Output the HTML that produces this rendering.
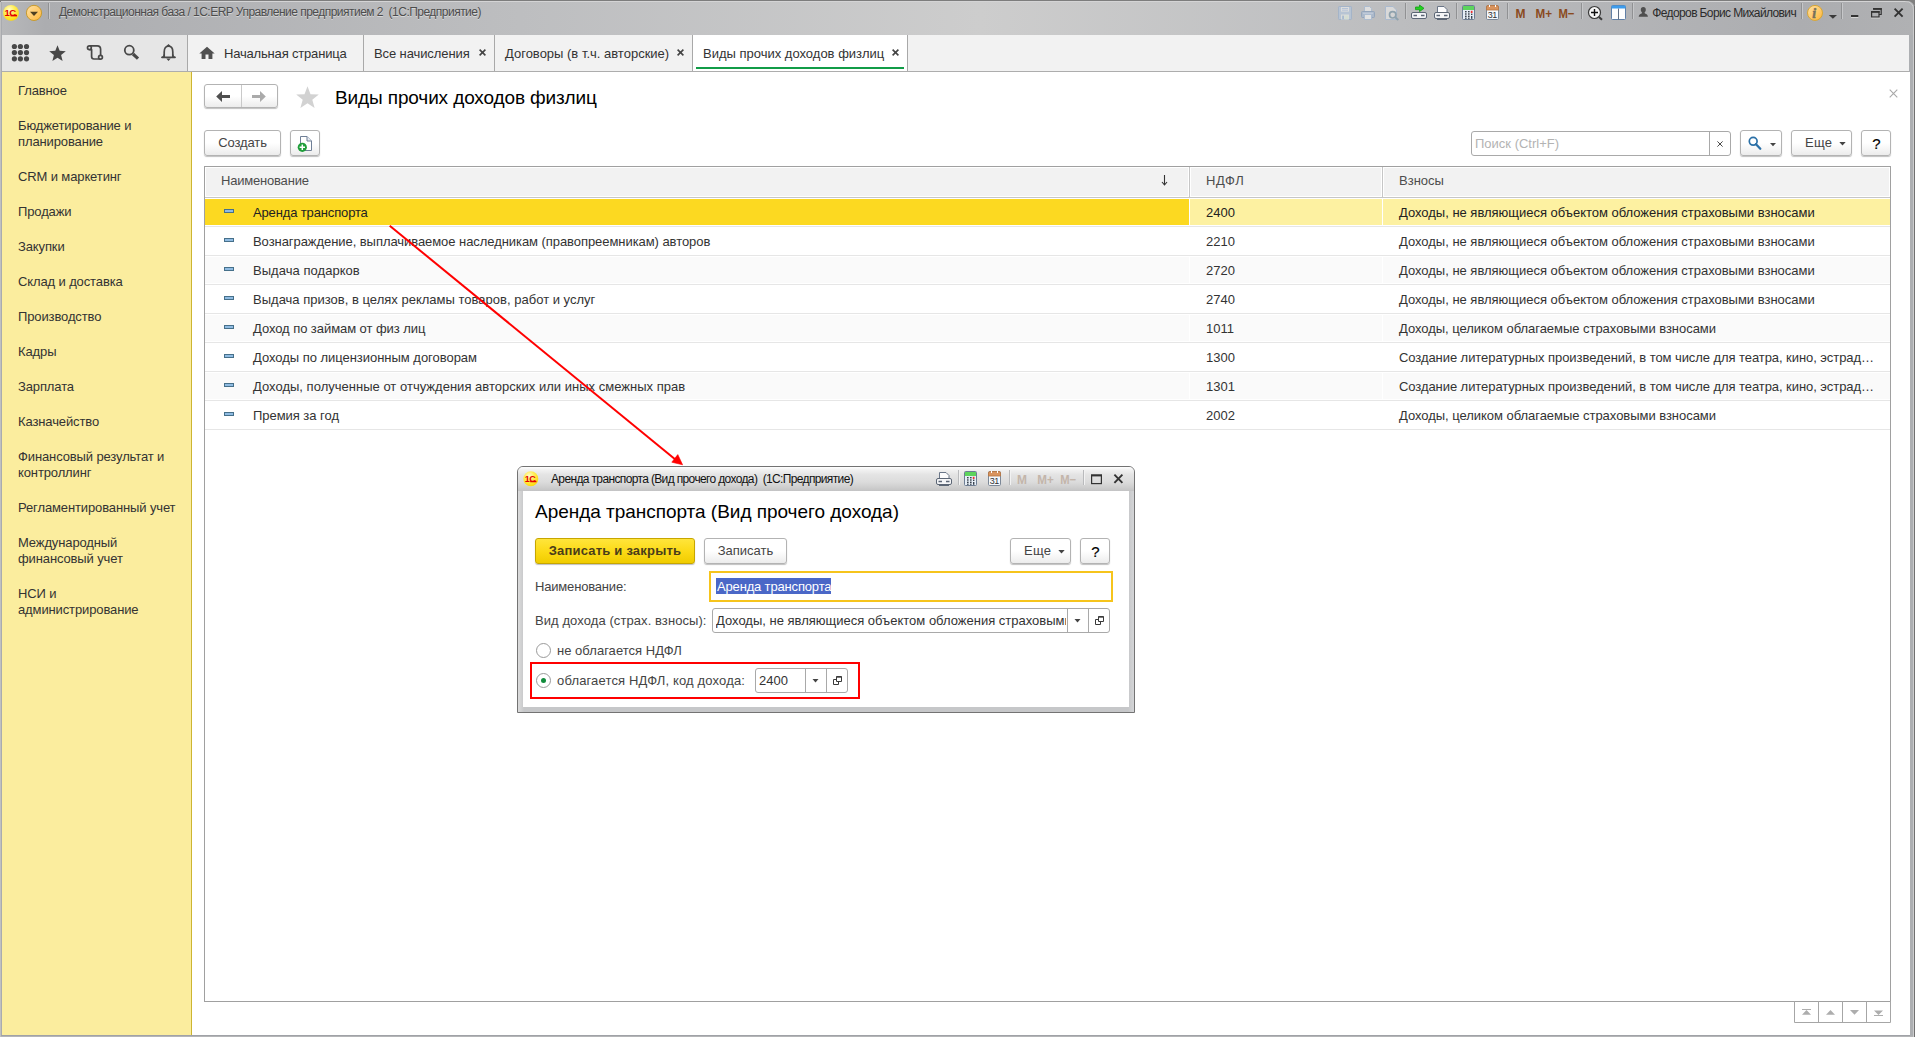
<!DOCTYPE html>
<html lang="ru">
<head>
<meta charset="utf-8">
<title>Виды прочих доходов физлиц</title>
<style>
*{box-sizing:border-box;margin:0;padding:0}
html,body{width:1915px;height:1037px;overflow:hidden;background:#fff}
body{font-family:"Liberation Sans",Arial,sans-serif;font-size:13px;color:#333;position:relative}
.abs{position:absolute}
#frame{position:absolute;left:0;top:0;width:1915px;height:1037px;background:#adafb2;overflow:hidden}
#edge{position:absolute;left:0;top:0;width:1915px;height:1037px;pointer-events:none;z-index:5}
#titlebar{position:absolute;left:0;top:0;width:1915px;height:35px;background:linear-gradient(90deg,#b8b9bb 0,#acadb0 45px,#bdbec0 520px,#cdcdcd 980px,#bcbdbf 1400px,#acadb0 1800px,#b0b1b3 1915px);border-top:1px solid #7d7d7d}
#titletext{position:absolute;left:59px;top:4px;font-size:12px;line-height:14px;color:#4c4c4c;white-space:pre;text-shadow:0 1px 0 rgba(255,255,255,.45);letter-spacing:-.52px}
#toolrow{position:absolute;left:2px;top:35px;width:1907px;height:37px;background:#f2f2f2;border-bottom:1px solid #adadad}
#iconpanel{position:absolute;left:0;top:0;width:186px;height:36px;background:#e6e6e6;border-right:1px solid #a9a9a9}
.tab{position:absolute;top:0;height:36px;border-right:1px solid #a9a9a9;font-size:13px;color:#333;line-height:36px;white-space:nowrap}
.tab svg.x{position:absolute;top:14px}
#sidebar{position:absolute;left:2px;top:72px;width:190px;height:963px;background:#fbed9e;border-right:1px solid #cdb531}
#sidebar div{position:absolute;left:16px;font-size:13px;line-height:16px;color:#333;white-space:nowrap;letter-spacing:-.12px}
#main{position:absolute;left:192px;top:72px;width:1718px;height:963px;background:#fff}
.btn{position:absolute;height:26px;border:1px solid #b3b3b3;border-radius:3px;background:linear-gradient(#fff 0%,#fff 50%,#ececec 100%);box-shadow:0 1px 1px rgba(0,0,0,.25);font-size:13px;color:#444;text-align:center;line-height:24px;white-space:nowrap}

.tab.act{background:#fff}
.tab.act i{position:absolute;left:3px;right:3px;top:32px;height:2px;background:#119c47}
.tab span.abs{top:1px}

#ftitle{font-size:19px;line-height:22px;color:#000;white-space:nowrap;letter-spacing:-.12px}
#search{border:1px solid #a9a9a9;border-radius:3px;background:#fff}
#search span{position:absolute;left:3px;top:0;line-height:23px;font-size:13px;color:#b3b3b3}
#search i{position:absolute;left:237px;top:0;width:1px;height:23px;background:#a9a9a9}
#grid{border:1px solid #a0a0a0;background:#fff}
#grid .hd{position:absolute;top:1px;height:28px;background:#f2f2f2;color:#4d4d4d;font-size:13px;line-height:28px}
#grid .hd span{position:absolute;top:-1px;white-space:nowrap}
#grid .hl{position:absolute;left:0;top:30px;width:1685px;height:1px;background:#c6c6c6}
#grid .vl{position:absolute;top:0;width:1px;height:31px;background:#c6c6c6}
.row{position:absolute;left:0;width:1685px;height:29px;border-bottom:1px solid #e6e6e6;font-size:13px;color:#333;line-height:28px}
.row b{position:absolute;top:1px;height:26px;font-weight:normal;white-space:nowrap;overflow:hidden}
.row .c1{left:0;width:984px}.row .c2{left:985px;width:192px}.row .c3{left:1178px;width:507px}
.row .c1 span{position:absolute;left:48px;top:0}.row .c2 span,.row .c3 span{position:absolute;left:16px;top:0}
.row.alt b{background:#fafafa}
.row.sel .c1{background:#fcd921}.row.sel .c2,.row.sel .c3{background:#fdf1a1}
.row.sel{color:#222}
.ic{position:absolute;left:19px;top:10px;width:10px;height:4px;background:#8fbbe2;border:1px solid #46708a}

#dlg{border:1px solid #737373;border-radius:6px 6px 0 0;background:linear-gradient(90deg,#dcdcdc 0,#c6c7c9 6px,#c6c7c9 610px,#d4d5d7 616px);overflow:hidden}
#dlg>*{position:absolute}
#dtb{left:0;top:0;width:616px;height:24px;background:linear-gradient(#ffffff 0%,#f3f3f3 10%,#e4e4e4 32%,#dcdcdc 62%,#cccccc 88%,#c3c3c4 100%)}
#dtt{left:33px;top:5px;font-size:12px;line-height:14px;color:#111;white-space:pre;letter-spacing:-.64px}
#dct{left:5px;top:24px;width:606px;height:216px;background:#fff}
#dh{left:17px;top:34px;font-size:19px;line-height:22px;color:#000;white-space:nowrap;letter-spacing:-.03px}
.ybtn{background:linear-gradient(#ffe53b 0%,#fbd914 55%,#f0cc00 100%);border-color:#c7a600;font-weight:bold;color:#4a3d1a}
.lbl{font-size:13px;line-height:16px;color:#444;white-space:nowrap;letter-spacing:.15px}
#inp1{border:2px solid #f6c41c;background:#fff}
#inp1 span{position:absolute;left:5px;top:5px;height:16px;line-height:17px;font-size:13px;background:#4a67c7;color:#fff;white-space:nowrap;padding:0 0 0 1px;letter-spacing:-.16px}
.inp{border:1px solid #a9a9a9;border-radius:3px;background:#fff;font-size:13px;color:#333}
.inp .t{position:absolute;left:3px;top:0;line-height:23px;white-space:nowrap;overflow:hidden;letter-spacing:0}
.inp i{position:absolute;top:0;width:1px;height:23px;background:#a9a9a9}
.radio{width:15px;height:15px;border:1px solid #9a9a9a;border-radius:50%;background:#fff}
.radio i{position:absolute;left:4px;top:4px;width:5px;height:5px;border-radius:50%;background:#118c3c}
</style>
</head>
<body>
<div id="frame">
 <svg id="edge" width="1915" height="1037" viewBox="0 0 1915 1037">
  <path d="M0 1.500 H1906" stroke="#d4d4d5" stroke-width="1"/>
  <path d="M1906 0 H1915 V9 Q1914.500 1.500 1906 0 Z" fill="#808080"/>
  <path d="M1905 1.500 Q1913.500 1.500 1913.500 10 V1037" fill="none" stroke="#cdcdce" stroke-width="1"/>
  <path d="M1914.500 6 V1037" stroke="#707070" stroke-width="1"/>
  <path d="M0 0 H2 V1 H1 V2 H0 Z" fill="#7a7a7a"/>
  <path d="M0.500 2 V1037" stroke="#c0c0c1" stroke-width="1"/><path d="M1.500 2 V1035" stroke="#a9abaf" stroke-width="1"/><path d="M1 1035.500 H1910" stroke="#a0a2a7" stroke-width="1"/><path d="M1 1036.500 H1913" stroke="#b4b5b7" stroke-width="1"/>
 </svg>
 <div id="titlebar">

  <svg class="abs" style="left:0;top:-1px" width="1915" height="35" viewBox="0 0 1915 35" font-family="Liberation Sans, Arial, sans-serif">
   <defs>
    <radialGradient id="g1c" cx="40%" cy="30%" r="75%"><stop offset="0" stop-color="#fffbd0"/><stop offset=".45" stop-color="#ffee55"/><stop offset="1" stop-color="#ffd800"/></radialGradient>
    <linearGradient id="gor" x1="0" y1="0" x2="1" y2="1"><stop offset="0" stop-color="#ffe2a6"/><stop offset="1" stop-color="#ffb73a"/></linearGradient>
   </defs>
   <!-- 1C logo -->
   <circle cx="11" cy="12.8" r="7.9" fill="url(#g1c)"/>
   <text x="4.6" y="16.2" font-size="9.5" font-weight="bold" fill="#e30000" letter-spacing="-.6">1С</text>
   <path d="M10.5 15.6 H17" stroke="#e30000" stroke-width="1.6"/>
   <!-- menu dropdown -->
   <circle cx="34" cy="12.9" r="7.6" fill="url(#gor)" stroke="#c79a2e" stroke-width="1"/>
   <path d="M30 11.8 H38 L34 16 Z" fill="#4e4022"/>
   <path d="M48.5 3 V19" stroke="#909193" stroke-width="1"/><path d="M49.5 3 V19" stroke="#c6c7c9" stroke-width="1"/>
   <!-- disabled save/print/preview -->
   <g>
    <rect x="1338.500" y="6.500" width="13" height="13" rx=".8" fill="#b7c4d4" stroke="#a4b4c8"/>
    <rect x="1341" y="7" width="8" height="4.600" fill="#dddddd"/><path d="M1342 8.500 H1348 M1342 10.200 H1348" stroke="#a9bdd6" stroke-width=".8"/>
    <rect x="1341" y="14.500" width="8" height="5" fill="#dadcda"/><rect x="1342.300" y="15.600" width="1.500" height="3.600" fill="#9db2cc"/><rect x="1344.800" y="15.500" width="3.500" height="3.800" fill="#d3ddd3"/>
    <path d="M1364.500 6.500 H1369.500 L1371.500 8.500 V11.500 H1364.500 Z" fill="#dedede" stroke="#adbccf"/>
    <rect x="1361.500" y="11.500" width="13" height="6" rx="1" fill="#acb9ca" stroke="#94a5bb"/><path d="M1363 13.200 H1373" stroke="#c9d4e2" stroke-width=".9"/>
    <rect x="1364.500" y="14.500" width="7" height="5" fill="#e2e2e2" stroke="#adbccf"/>
    <path d="M1385.500 6.500 H1393 L1396.500 10 V19.500 H1385.500 Z" fill="#d9d9d9" stroke="#abbace"/>
    <circle cx="1392.700" cy="14.800" r="3.200" fill="#d4d4d4" stroke="#8fa2ad" stroke-width="1.700"/>
    <path d="M1395.200 17.200 L1398.300 20" stroke="#8fa2ad" stroke-width="2"/>
   </g>
   <path d="M1405.5 3 V19" stroke="#909193" stroke-width="1"/><path d="M1406.5 3 V19" stroke="#c6c7c9" stroke-width="1"/>
   <!-- send -->
   <path d="M1415.500 7 H1419.500 V5 L1424 8.300 L1419.500 11.600 V9.600 H1415.500 Z" fill="#22d322" stroke="#159a15" stroke-width=".8"/>
   <rect x="1411.500" y="12.500" width="15" height="6" rx="1.500" fill="#f4f5f7" stroke="#5c6675" stroke-width="1"/>
   <path d="M1413.500 15.500 H1417 M1421 15.500 H1424.500" stroke="#5c6675" stroke-width="1.600"/>
   <!-- print doc -->
   <path d="M1437.500 6.500 H1444 L1447 9.500 V13 H1437.500 Z" fill="#fbfbfc" stroke="#6a7688" stroke-width="1"/>
   <rect x="1434.500" y="12.500" width="15" height="6" rx="1.500" fill="#f4f5f7" stroke="#5c6675" stroke-width="1"/>
   <path d="M1436.500 15.500 H1440 M1444 15.500 H1447.500" stroke="#5c6675" stroke-width="1.600"/>
   <path d="M1437 19.500 H1447" stroke="#5c6675" stroke-width="1"/>
   <path d="M1456.5 3 V19" stroke="#909193" stroke-width="1"/><path d="M1457.5 3 V19" stroke="#c6c7c9" stroke-width="1"/>
   <!-- calc -->
   <rect x="1462.500" y="5.500" width="12" height="14" rx="1" fill="#e6eef6" stroke="#6d7d93"/>
   <rect x="1463" y="6" width="11" height="4" fill="#5dd45d"/>
   <g fill="#39424e"><rect x="1465" y="11" width="1.600" height="1.400"/><rect x="1468" y="11" width="1.600" height="1.400"/><rect x="1465" y="13.300" width="1.600" height="1.400"/><rect x="1468" y="13.300" width="1.600" height="1.400"/><rect x="1465" y="15.600" width="1.600" height="1.400"/><rect x="1468" y="15.600" width="1.600" height="1.400"/><rect x="1465" y="17.600" width="1.600" height="1.200"/><rect x="1468" y="17.600" width="1.600" height="1.200"/><rect x="1471" y="13.600" width="1.400" height="1.400"/><rect x="1471" y="16" width="1.400" height="2.800"/></g>
   <rect x="1470.800" y="10.800" width="1.700" height="2.200" fill="#f03030"/>
   <!-- calendar -->
   <rect x="1486.500" y="5.500" width="12" height="14" rx="1.200" fill="#f4f8fc" stroke="#7b8797"/>
   <path d="M1486.500 10 V7 Q1486.500 5.500 1488 5.500 H1497 Q1498.500 5.500 1498.500 7 V10 Z" fill="#d9945e" stroke="#b9753f" stroke-width=".8"/>
   <path d="M1489.500 5 V7 M1495.500 5 V7" stroke="#fff" stroke-width="1"/>
   <text x="1487.800" y="18.200" font-size="9" fill="#333" letter-spacing="-.5">31</text>
   <path d="M1507.5 3 V19" stroke="#909193" stroke-width="1"/><path d="M1508.5 3 V19" stroke="#c6c7c9" stroke-width="1"/>
   <g font-weight="bold" font-size="13" fill="#8a4a20">
    <text x="1515.600" y="17.500" textLength="10" lengthAdjust="spacingAndGlyphs">M</text>
    <text x="1535.600" y="17.500" textLength="16.500" lengthAdjust="spacingAndGlyphs">M+</text>
    <text x="1558.400" y="17.500" textLength="16" lengthAdjust="spacingAndGlyphs">M−</text>
   </g>
   <path d="M1581.5 3 V19" stroke="#909193" stroke-width="1"/><path d="M1582.5 3 V19" stroke="#c6c7c9" stroke-width="1"/>
   <!-- zoom -->
   <circle cx="1594.500" cy="12.500" r="6" fill="#f6f6f6" stroke="#3a3a3a" stroke-width="1.200"/>
   <path d="M1591 12.500 H1598 M1594.500 9 V16" stroke="#111" stroke-width="1.400"/>
   <path d="M1599 17 L1602 19.800" stroke="#3a3a3a" stroke-width="2"/>
   <!-- panels -->
   <rect x="1611.500" y="5.500" width="14" height="14" rx="1" fill="#fdfdfd" stroke="#5f7fa6"/>
   <path d="M1611.500 8.500 V6.500 Q1611.500 5.500 1612.500 5.500 H1624.500 Q1625.500 5.500 1625.500 6.500 V8.500 Z" fill="#3d9cec"/>
   <path d="M1618.500 8.500 V19.500" stroke="#5f6f85" stroke-width="1"/>
   <path d="M1632.5 3 V19" stroke="#909193" stroke-width="1"/><path d="M1633.5 3 V19" stroke="#c6c7c9" stroke-width="1"/>
   <!-- user -->
   <path d="M1643.300 7 a2.500 2.800 0 0 1 0 5.600 a2.500 2.800 0 0 1 0 -5.600 Z M1642 12 h2.600 l.3 1.500 q3 .8 3 3.300 h-9.200 q0 -2.500 3 -3.300 Z" fill="#4f4f4f"/>
   <text x="1652.300" y="17.300" font-size="12" fill="#2b2b2b" letter-spacing="-.62">Федоров Борис Михайлович</text>
   <path d="M1801.5 3 V19" stroke="#909193" stroke-width="1"/><path d="M1802.5 3 V19" stroke="#c6c7c9" stroke-width="1"/>
   <!-- info -->
   <circle cx="1815" cy="12.900" r="7.500" fill="url(#gor)" stroke="#d6a533" stroke-width="1"/>
   <text x="1812.300" y="17.600" font-family="Liberation Serif, serif" font-style="italic" font-weight="bold" font-size="14" fill="#77705c" stroke="#77705c" stroke-width=".5">i</text>
   <path d="M1828.800 15 H1837 L1832.900 18.800 Z" fill="#3a3a3a"/>
   <path d="M1841.5 3 V19" stroke="#909193" stroke-width="1"/><path d="M1842.5 3 V19" stroke="#c6c7c9" stroke-width="1"/>
   <!-- window controls -->
   <path d="M1851 16 H1858.300" stroke="#333" stroke-width="2"/><path d="M1851 17.500 H1858.300" stroke="#d5d5d5" stroke-width="1"/>
   <path d="M1873.500 8.800 H1881.200 V14.500 H1879" fill="none" stroke="#333" stroke-width="1.200"/><path d="M1873 8.900 H1881.800" stroke="#333" stroke-width="1.800"/>
   <rect x="1871.600" y="11.600" width="7.400" height="5.400" fill="none" stroke="#333" stroke-width="1.200"/><path d="M1871 11.900 H1879.600" stroke="#333" stroke-width="1.800"/>
   <path d="M1871 18.200 H1880" stroke="#d0d0d0" stroke-width=".8"/>
   <path d="M1894.600 8.600 L1902.600 16.600 M1902.600 8.600 L1894.600 16.600" stroke="#333" stroke-width="1.900"/>
  </svg>
  <div id="titletext">Демонстрационная база / 1С:ERP Управление предприятием 2  (1С:Предприятие)</div>
 </div>
 <div id="toolrow">

  <div id="iconpanel">
   <svg class="abs" style="left:0;top:0" width="186" height="36" viewBox="0 0 186 36">
    <g fill="#484848"><circle cx="12.4" cy="11.5" r="2.6"/><circle cx="18.4" cy="11.5" r="2.6"/><circle cx="24.5" cy="11.5" r="2.6"/><circle cx="12.4" cy="17.6" r="2.6"/><circle cx="18.4" cy="17.6" r="2.6"/><circle cx="24.5" cy="17.6" r="2.6"/><circle cx="12.4" cy="23.8" r="2.6"/><circle cx="18.4" cy="23.8" r="2.6"/><circle cx="24.5" cy="23.8" r="2.6"/><path d="M55.5 10.2 L57.7 15.8 L63.8 16.2 L59.1 20.1 L60.6 25.9 L55.5 22.7 L50.4 25.9 L51.9 20.1 L47.2 16.2 L53.3 15.8 Z"/></g>
    <g fill="none" stroke="#484848" stroke-width="1.700" stroke-linejoin="round">
     <path d="M87.400 14.600 H89.600 V21.600 Q89.600 24 92 24 H98.500 M87.400 10.800 H95.200 Q98.600 10.800 98.600 14.200 V20.500"/>
     <circle cx="87.400" cy="12.700" r="1.900" fill="#e6e6e6"/><circle cx="98.500" cy="22.300" r="1.900" fill="#e6e6e6"/>
    </g>
    <g fill="none" stroke="#484848">
     <circle cx="127.300" cy="15.200" r="4.500" stroke-width="1.800"/>
     <path d="M131 19 L136 23.600" stroke-width="3.200"/>
    </g>
    <g fill="none" stroke="#484848" stroke-width="1.700" stroke-linejoin="round" stroke-linecap="round">
     <path d="M160 22.300 H173 M162.200 22 V17 Q162.200 11.200 166.500 11.200 Q170.800 11.200 170.800 17 V22"/>
     <path d="M160.200 22.300 Q162 21.500 162.200 19.500 M172.800 22.300 Q171 21.500 170.800 19.500" stroke-width="1.200"/>
    </g>
    <path d="M164.900 10.600 L166.500 8.900 L168.100 10.600 V11.600 H164.900 Z M164.300 23.600 H168.700 L166.500 25.900 Z" fill="#484848"/>
   </svg>
  </div>
  <div class="tab" style="left:186px;width:176px"><svg class="abs" style="left:11px;top:11px" width="16" height="14" viewBox="0 0 16 14"><path d="M8 0.8 L0.3 7.6 H2.6 V13 H6.5 V8.6 H9.5 V13 H13.4 V7.6 H15.7 Z" fill="#505050"/></svg><span class="abs" style="left:36px;letter-spacing:-.18px">Начальная страница</span></div>
  <div class="tab" style="left:362px;width:131px"><span class="abs" style="left:10px;letter-spacing:-.1px">Все начисления</span><svg class="x" style="left:115px" width="7" height="7" viewBox="0 0 7 7"><path d="M0.6 0.6 L6.4 6.4 M6.4 0.6 L0.6 6.4" stroke="#444" stroke-width="1.6" fill="none"/></svg></div>
  <div class="tab" style="left:493px;width:198px"><span class="abs" style="left:10px">Договоры (в т.ч. авторские)</span><svg class="x" style="left:182px" width="7" height="7" viewBox="0 0 7 7"><path d="M0.6 0.6 L6.4 6.4 M6.4 0.6 L0.6 6.4" stroke="#444" stroke-width="1.6" fill="none"/></svg></div>
  <div class="tab act" style="left:691px;width:215px"><span class="abs" style="left:10px">Виды прочих доходов физлиц</span><svg class="x" style="left:199px" width="7" height="7" viewBox="0 0 7 7"><path d="M0.6 0.6 L6.4 6.4 M6.4 0.6 L0.6 6.4" stroke="#444" stroke-width="1.6" fill="none"/></svg><i></i></div>
 </div>
 <div id="sidebar">
  <div style="top:11px">Главное</div>
  <div style="top:46px">Бюджетирование и</div>
  <div style="top:62px">планирование</div>
  <div style="top:97px">CRM и маркетинг</div>
  <div style="top:132px">Продажи</div>
  <div style="top:167px">Закупки</div>
  <div style="top:202px">Склад и доставка</div>
  <div style="top:237px">Производство</div>
  <div style="top:272px">Кадры</div>
  <div style="top:307px">Зарплата</div>
  <div style="top:342px">Казначейство</div>
  <div style="top:377px">Финансовый результат и</div>
  <div style="top:393px">контроллинг</div>
  <div style="top:428px">Регламентированный учет</div>
  <div style="top:463px">Международный</div>
  <div style="top:479px">финансовый учет</div>
  <div style="top:514px">НСИ и</div>
  <div style="top:530px">администрирование</div>
 </div>
 <div id="main"></div>

 <!-- main form -->
 <div class="btn" style="left:204px;top:84px;width:74px;height:24px">
  <svg class="abs" style="left:0;top:0" width="72" height="22" viewBox="0 0 72 22">
   <path d="M36.5 0 V22" stroke="#c9c9c9" stroke-width="1"/>
   <path d="M11.2 11.5 L17 6 V10 H25 V13 H17 V17 Z" fill="#4f4f4f"/>
   <path d="M60.8 11.5 L55 6 V10 H47 V13 H55 V17 Z" fill="#aaaaaa"/>
  </svg>
 </div>
 <svg class="abs" style="left:295px;top:85px" width="25" height="24" viewBox="0 0 25 24"><path d="M12.5 1.2 L15.5 9.2 L23.8 9.5 L17.3 14.8 L19.6 22.9 L12.5 18.2 L5.4 22.9 L7.7 14.8 L1.2 9.5 L9.5 9.2 Z" fill="#d2d2d2"/></svg>
 <div class="abs" id="ftitle" style="left:335px;top:87px">Виды прочих доходов физлиц</div>
 <svg class="abs" style="left:1889px;top:89px" width="9" height="9" viewBox="0 0 9 9"><path d="M0.7 0.7 L8.3 8.3 M8.3 0.7 L0.7 8.3" stroke="#a8a8a8" stroke-width="1.1" fill="none"/></svg>

 <div class="btn" style="left:204px;top:130px;width:77px"><span style="letter-spacing:-.1px">Создать</span></div>
 <div class="btn" style="left:290px;top:130px;width:30px">
  <svg class="abs" style="left:5px;top:4px" width="18" height="18" viewBox="0 0 18 18">
   <path d="M4.5 1.5 H11 L15.5 6 V15.5 H4.5 Z" fill="#fff" stroke="#6f7f96" stroke-width="1"/>
   <path d="M11 1.5 V6 H15.5" fill="#e8edf3" stroke="#6f7f96" stroke-width="1"/>
   <circle cx="6.3" cy="12.3" r="4.6" fill="#1f9e3a"/>
   <path d="M3.6 12.3 H9 M6.3 9.6 V15" stroke="#fff" stroke-width="1.5"/>
  </svg>
 </div>

 <div class="abs" id="search" style="left:1471px;top:131px;width:260px;height:25px">
  <span>Поиск (Ctrl+F)</span><i></i>
  <svg class="abs" style="left:245px;top:9px" width="6" height="6" viewBox="0 0 6 6"><path d="M0.400 0.400 L5.600 5.600 M5.600 0.400 L0.400 5.600" stroke="#4a4a4a" stroke-width="1" fill="none"/></svg>
 </div>
 <div class="btn" style="left:1740px;top:130px;width:42px">
  <svg class="abs" style="left:0;top:0" width="40" height="24" viewBox="0 0 40 24">
   <circle cx="12.2" cy="10.3" r="3.9" fill="none" stroke="#2b70a7" stroke-width="1.7"/>
   <path d="M15 13.2 L19.3 17.7" stroke="#2b70a7" stroke-width="2.3" stroke-linecap="round"/>
   <path d="M29 12 H35 L32 15.2 Z" fill="#444"/>
  </svg>
 </div>
 <div class="btn" style="left:1791px;top:130px;width:61px;font-size:13px;letter-spacing:.3px;text-align:left;padding-left:13px">Еще<svg class="abs" style="left:47px;top:11px" width="7" height="4" viewBox="0 0 7 4"><path d="M0.3 0 H6.7 L3.5 3.6 Z" fill="#444"/></svg></div>
 <div class="btn" style="left:1861px;top:130px;width:30px;font-size:15px;line-height:26px;color:#000;-webkit-text-stroke:.2px #000;padding-left:1px">?</div>

 <div class="abs" id="grid" style="left:204px;top:166px;width:1687px;height:836px">
  <div class="hd" style="left:1px;width:982px"><span style="left:15px;letter-spacing:-.2px">Наименование</span><svg class="abs" style="left:955px;top:7px" width="7" height="11" viewBox="0 0 7 11"><path d="M3.5 0 V9.5 M1 7 L3.5 10 L6 7" stroke="#333" stroke-width="1.1" fill="none"/></svg></div>
  <div class="hd" style="left:986px;width:190px"><span style="left:15px;letter-spacing:.6px">НДФЛ</span></div>
  <div class="hd" style="left:1179px;width:505px"><span style="left:15px">Взносы</span></div>
  <div class="hl"></div><div class="vl" style="left:984px"></div><div class="vl" style="left:1177px"></div>
  <div class="row sel" style="top:31px"><b class="c1"><i class="ic"></i><span style="letter-spacing:-0.140px">Аренда транспорта</span></b><b class="c2"><span>2400</span></b><b class="c3"><span style="letter-spacing:-0.013px">Доходы, не являющиеся объектом обложения страховыми взносами</span></b></div>
  <div class="row" style="top:60px"><b class="c1"><i class="ic"></i><span style="letter-spacing:-0.060px">Вознаграждение, выплачиваемое наследникам (правопреемникам) авторов</span></b><b class="c2"><span>2210</span></b><b class="c3"><span style="letter-spacing:-0.013px">Доходы, не являющиеся объектом обложения страховыми взносами</span></b></div>
  <div class="row alt" style="top:89px"><b class="c1"><i class="ic"></i><span style="letter-spacing:0.040px">Выдача подарков</span></b><b class="c2"><span>2720</span></b><b class="c3"><span style="letter-spacing:-0.013px">Доходы, не являющиеся объектом обложения страховыми взносами</span></b></div>
  <div class="row" style="top:118px"><b class="c1"><i class="ic"></i><span style="letter-spacing:0.010px">Выдача призов, в целях рекламы товаров, работ и услуг</span></b><b class="c2"><span>2740</span></b><b class="c3"><span style="letter-spacing:-0.013px">Доходы, не являющиеся объектом обложения страховыми взносами</span></b></div>
  <div class="row alt" style="top:147px"><b class="c1"><i class="ic"></i><span style="letter-spacing:-0.060px">Доход по займам от физ лиц</span></b><b class="c2"><span>1011</span></b><b class="c3"><span style="letter-spacing:-0.035px">Доходы, целиком облагаемые страховыми взносами</span></b></div>
  <div class="row" style="top:176px"><b class="c1"><i class="ic"></i><span style="letter-spacing:-0.030px">Доходы по лицензионным договорам</span></b><b class="c2"><span>1300</span></b><b class="c3"><span style="letter-spacing:-0.070px">Создание литературных произведений, в том числе для театра, кино, эстрад…</span></b></div>
  <div class="row alt" style="top:205px"><b class="c1"><i class="ic"></i><span style="letter-spacing:0.016px">Доходы, полученные от отчуждения авторских или иных смежных прав</span></b><b class="c2"><span>1301</span></b><b class="c3"><span style="letter-spacing:-0.070px">Создание литературных произведений, в том числе для театра, кино, эстрад…</span></b></div>
  <div class="row" style="top:234px"><b class="c1"><i class="ic"></i><span style="letter-spacing:-0.040px">Премия за год</span></b><b class="c2"><span>2002</span></b><b class="c3"><span style="letter-spacing:-0.035px">Доходы, целиком облагаемые страховыми взносами</span></b></div>
 </div>
 <div class="abs" id="scrl" style="left:1794px;top:1001px;width:97px;height:22px">
  <svg width="97" height="22" viewBox="0 0 97 22">
   <g fill="none" stroke="#a6a6a6" stroke-width="1"><path d="M0.5 0 V21.5 H96.5 V0 M24.5 0 V21.5 M48.5 0 V21.5 M72.5 0 V21.5"/></g>
   <g fill="#adadad">
    <path d="M8 8 H17 V9 H8 Z M12.5 9 L17 13.8 H8 Z"/>
    <path d="M36.5 9 L41 13.8 H32 Z"/>
    <path d="M56 9 H65 L60.5 13.8 Z"/>
    <path d="M80 9.5 H89 L84.5 14 Z M80 14 H89 V15 H80 Z"/>
   </g>
  </svg>
 </div>

 <!-- red arrow -->
 <svg class="abs" style="left:380px;top:218px" width="320" height="255" viewBox="380 218 320 255"><path d="M389.7 225.7 L676 460" stroke="#ff0000" stroke-width="2" fill="none"/><path d="M682.6 464.8 L677.8 454.6 L671.8 462.2 Z" fill="#ff0000" stroke="#ff0000" stroke-width=".6"/></svg>

 <!-- dialog -->
 <div class="abs" id="dlg" style="left:517px;top:466px;width:618px;height:247px">
  <div id="dtb"></div>

  <svg style="left:-1px;top:-1px" width="618" height="26" viewBox="517 466 618 26" font-family="Liberation Sans, Arial, sans-serif">
   <defs><radialGradient id="g1d" cx="40%" cy="30%" r="75%"><stop offset="0" stop-color="#fffbd0"/><stop offset=".45" stop-color="#ffee55"/><stop offset="1" stop-color="#ffd800"/></radialGradient></defs>
   <circle cx="530.800" cy="478.800" r="7.500" fill="url(#g1d)"/>
   <text x="524.800" y="482" font-size="9" font-weight="bold" fill="#e30000" letter-spacing="-.6">1С</text>
   <path d="M530.200 481.500 H536.400" stroke="#e30000" stroke-width="1.500"/>
   <!-- print doc -->
   <path d="M939.500 472.500 H946 L949 475.500 V479 H939.500 Z" fill="#fbfbfc" stroke="#6a7688" stroke-width="1"/>
   <rect x="936.500" y="478.500" width="15" height="6" rx="1.500" fill="#f4f5f7" stroke="#5c6675" stroke-width="1"/>
   <path d="M938.500 481.500 H942 M946 481.500 H949.500" stroke="#5c6675" stroke-width="1.600"/>
   <path d="M939 485.500 H949" stroke="#5c6675" stroke-width="1"/>
   <path d="M958.5 470 V485" stroke="#b9babc" stroke-width="1"/><path d="M959.5 470 V485" stroke="#f2f2f2" stroke-width="1"/>
   <rect x="964.500" y="471.500" width="12" height="14" rx="1" fill="#e6eef6" stroke="#6d7d93"/>
   <rect x="965" y="472" width="11" height="4" fill="#5dd45d"/>
   <g fill="#39424e"><rect x="967" y="477" width="1.600" height="1.400"/><rect x="970" y="477" width="1.600" height="1.400"/><rect x="967" y="479.300" width="1.600" height="1.400"/><rect x="970" y="479.300" width="1.600" height="1.400"/><rect x="967" y="481.600" width="1.600" height="1.400"/><rect x="970" y="481.600" width="1.600" height="1.400"/><rect x="967" y="483.600" width="1.600" height="1.200"/><rect x="970" y="483.600" width="1.600" height="1.200"/><rect x="973" y="479.600" width="1.400" height="1.400"/><rect x="973" y="482" width="1.400" height="2.800"/></g>
   <rect x="972.800" y="476.800" width="1.700" height="2.200" fill="#f03030"/>
   <rect x="988.500" y="471.500" width="12" height="14" rx="1.200" fill="#f4f8fc" stroke="#7b8797"/>
   <path d="M988.500 476 V473 Q988.500 471.500 990 471.500 H999 Q1000.500 471.500 1000.500 473 V476 Z" fill="#d9945e" stroke="#b9753f" stroke-width=".8"/>
   <path d="M991.500 471 V473 M997.500 471 V473" stroke="#fff" stroke-width="1"/>
   <text x="989.800" y="484.200" font-size="9" fill="#333" letter-spacing="-.5">31</text>
   <path d="M1009.5 470 V485" stroke="#b9babc" stroke-width="1"/><path d="M1010.5 470 V485" stroke="#f2f2f2" stroke-width="1"/>
   <g font-weight="bold" font-size="13" fill="#c3b5aa">
    <text x="1017" y="483.500" textLength="10" lengthAdjust="spacingAndGlyphs">M</text>
    <text x="1037.200" y="483.500" textLength="16.500" lengthAdjust="spacingAndGlyphs">M+</text>
    <text x="1060.200" y="483.500" textLength="16" lengthAdjust="spacingAndGlyphs">M−</text>
   </g>
   <path d="M1083.5 470 V485" stroke="#b9babc" stroke-width="1"/><path d="M1084.5 470 V485" stroke="#f2f2f2" stroke-width="1"/>
   <rect x="1091.600" y="475.600" width="9.800" height="8" fill="none" stroke="#333" stroke-width="1.200"/><path d="M1091 475.200 H1102" stroke="#333" stroke-width="2"/>
   <path d="M1114.400 474.600 L1122.400 482.800 M1122.400 474.600 L1114.400 482.800" stroke="#333" stroke-width="1.900"/>
  </svg>
  <div id="dtt">Аренда транспорта (Вид прочего дохода)  (1С:Предприятие)</div>
  <div id="dct"></div>
  <div id="dh">Аренда транспорта (Вид прочего дохода)</div>
  <div class="btn ybtn" style="left:17px;top:71px;width:160px"><span style="letter-spacing:.2px">Записать и закрыть</span></div>
  <div class="btn" style="left:186px;top:71px;width:83px"><span>Записать</span></div>
  <div class="btn" style="left:492px;top:71px;width:61px;font-size:13px;letter-spacing:.3px;text-align:left;padding-left:13px">Еще<svg class="abs" style="left:47px;top:11px" width="7" height="4" viewBox="0 0 7 4"><path d="M0.3 0 H6.7 L3.5 3.6 Z" fill="#444"/></svg></div>
  <div class="btn" style="left:562px;top:71px;width:30px;font-size:15px;line-height:26px;color:#000;-webkit-text-stroke:.2px #000;padding-left:1px">?</div>

  <div class="lbl" style="left:17px;top:112px;letter-spacing:-.18px">Наименование:</div>
  <div class="abs" id="inp1" style="left:191px;top:104px;width:404px;height:31px"><span>Аренда транспорта</span></div>
  <div class="lbl" style="left:17px;top:146px;letter-spacing:.08px">Вид дохода (страх. взносы):</div>
  <div class="abs inp" style="left:194px;top:141px;width:398px;height:25px"><span class="t" style="width:350px">Доходы, не являющиеся объектом обложения страховыми взносами</span><i style="left:354px"></i><i style="left:375px"></i>
   <svg class="abs" style="left:361px;top:10px" width="7" height="4" viewBox="0 0 7 4"><path d="M0.5 0 H6.5 L3.5 3.4 Z" fill="#444"/></svg>
   <svg class="abs" style="left:382px;top:7px" width="9" height="9" viewBox="0 0 9 9"><path d="M3.5 0.5 H8.5 V5.5 H3.5 Z M3 1.2 H9 M3.5 3.500 H0.5 V8.500 H5.5 V5.500" fill="none" stroke="#3a3a3a" stroke-width="1"/></svg>
  </div>
  <div class="radio" style="left:18px;top:176px"></div>
  <div class="lbl" style="left:39px;top:176px;letter-spacing:.03px">не облагается НДФЛ</div>
  <div class="abs" style="left:12px;top:195px;width:330px;height:37px;border:2px solid #ff0000"></div>
  <div class="radio on" style="left:18px;top:206px"><i></i></div>
  <div class="lbl" style="left:39px;top:206px;letter-spacing:.15px">облагается НДФЛ, код дохода:</div>
  <div class="abs inp" style="left:237px;top:201px;width:93px;height:25px"><span class="t" style="width:45px">2400</span><i style="left:49px"></i><i style="left:70px"></i>
   <svg class="abs" style="left:56px;top:10px" width="7" height="4" viewBox="0 0 7 4"><path d="M0.5 0 H6.5 L3.5 3.4 Z" fill="#444"/></svg>
   <svg class="abs" style="left:77px;top:7px" width="9" height="9" viewBox="0 0 9 9"><path d="M3.5 0.5 H8.5 V5.5 H3.5 Z M3 1.2 H9 M3.5 3.500 H0.5 V8.500 H5.5 V5.500" fill="none" stroke="#3a3a3a" stroke-width="1"/></svg>
  </div>
 </div>
</div>
</body>
</html>
